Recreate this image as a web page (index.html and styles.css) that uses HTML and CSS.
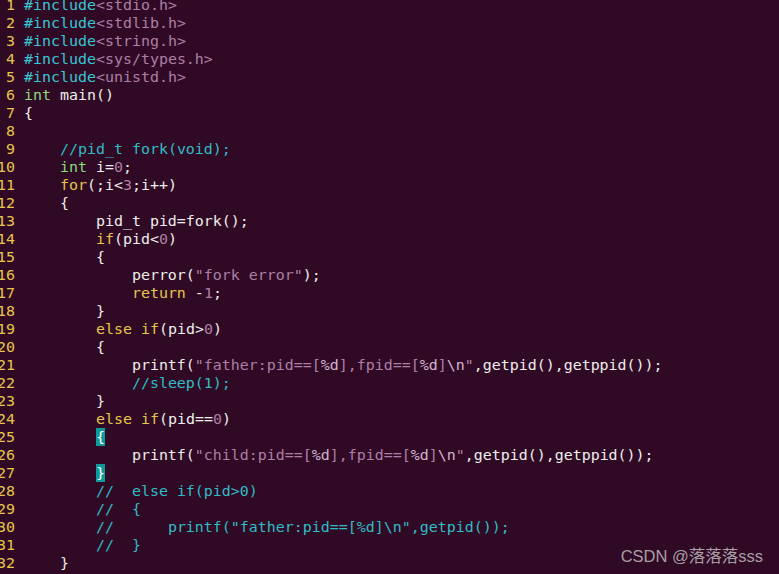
FILE: index.html
```html
<!DOCTYPE html>
<html>
<head>
<meta charset="utf-8">
<link rel="stylesheet" href="styles.css">
</head>
<body>
<div class="screen">
<div class="editor">
<div class="ln"><span class="nr"> 1 </span><span class="pp">#include</span><span class="st">&lt;stdio.h&gt;</span></div>
<div class="ln"><span class="nr"> 2 </span><span class="pp">#include</span><span class="st">&lt;stdlib.h&gt;</span></div>
<div class="ln"><span class="nr"> 3 </span><span class="pp">#include</span><span class="st">&lt;string.h&gt;</span></div>
<div class="ln"><span class="nr"> 4 </span><span class="pp">#include</span><span class="st">&lt;sys/types.h&gt;</span></div>
<div class="ln"><span class="nr"> 5 </span><span class="pp">#include</span><span class="st">&lt;unistd.h&gt;</span></div>
<div class="ln"><span class="nr"> 6 </span><span class="ty">int</span> main()</div>
<div class="ln"><span class="nr"> 7 </span>{</div>
<div class="ln"><span class="nr"> 8 </span></div>
<div class="ln"><span class="nr"> 9 </span>    <span class="cm">//pid_t fork(void);</span></div>
<div class="ln"><span class="nr">10 </span>    <span class="ty">int</span> i=<span class="st">0</span>;</div>
<div class="ln"><span class="nr">11 </span>    <span class="kw">for</span>(;i&lt;<span class="st">3</span>;i++)</div>
<div class="ln"><span class="nr">12 </span>    {</div>
<div class="ln"><span class="nr">13 </span>        pid_t pid=fork();</div>
<div class="ln"><span class="nr">14 </span>        <span class="kw">if</span>(pid&lt;<span class="st">0</span>)</div>
<div class="ln"><span class="nr">15 </span>        {</div>
<div class="ln"><span class="nr">16 </span>            perror(<span class="st">"fork error"</span>);</div>
<div class="ln"><span class="nr">17 </span>            <span class="kw">return</span> -<span class="st">1</span>;</div>
<div class="ln"><span class="nr">18 </span>        }</div>
<div class="ln"><span class="nr">19 </span>        <span class="kw">else</span> <span class="kw">if</span>(pid&gt;<span class="st">0</span>)</div>
<div class="ln"><span class="nr">20 </span>        {</div>
<div class="ln"><span class="nr">21 </span>            printf(<span class="st">"father:pid==[<span class="sp">%d</span>],fpid==[<span class="sp">%d</span>]<span class="sp">\n</span>"</span>,getpid(),getppid());</div>
<div class="ln"><span class="nr">22 </span>            <span class="cm">//sleep(1);</span></div>
<div class="ln"><span class="nr">23 </span>        }</div>
<div class="ln"><span class="nr">24 </span>        <span class="kw">else</span> <span class="kw">if</span>(pid==<span class="st">0</span>)</div>
<div class="ln"><span class="nr">25 </span>        <span class="mp">{</span></div>
<div class="ln"><span class="nr">26 </span>            printf(<span class="st">"child:pid==[<span class="sp">%d</span>],fpid==[<span class="sp">%d</span>]<span class="sp">\n</span>"</span>,getpid(),getppid());</div>
<div class="ln"><span class="nr">27 </span>        <span class="mp">}</span></div>
<div class="ln"><span class="nr">28 </span>        <span class="cm">//  else if(pid&gt;0)</span></div>
<div class="ln"><span class="nr">29 </span>        <span class="cm">//  {</span></div>
<div class="ln"><span class="nr">30 </span>        <span class="cm">//      printf("father:pid==[%d]\n",getpid());</span></div>
<div class="ln"><span class="nr">31 </span>        <span class="cm">//  }</span></div>
<div class="ln"><span class="nr">32 </span>    }</div>
</div>
<div class="mark">CSDN @落落落sss</div>
</div>
</body>
</html>
```

FILE: styles.css
```css
html, body {
  margin: 0;
  padding: 0;
  background: #300a24;
  overflow: hidden;
}
.screen {
  position: relative;
  width: 779px;
  height: 574px;
  overflow: hidden;
  background: #300a24;
}
.editor {
  margin-top: -4px;
  margin-left: -3px;
  font-family: "DejaVu Sans Mono", "Liberation Mono", monospace;
  font-size: 14.95px;
  color: #eeeeec;
}
.ln {
  height: 18px;
  line-height: 18px;
  white-space: pre;
}
.nr { color: #e6c64c; }
.pp { color: #38c6d4; }
.st { color: #ad7fa8; }
.sp { color: #d3b3cf; }
.ty { color: #8ada7c; }
.kw { color: #e6c64c; }
.cm { color: #30bcc6; }
.mp {
  background: #0f9a9a;
  color: #ffffff;
}
.mark {
  position: absolute;
  right: 16px;
  top: 543px;
  font-family: "Liberation Sans", "Noto Sans CJK SC", sans-serif;
  font-size: 16.5px;
  color: #aa9ea7;
}
```
